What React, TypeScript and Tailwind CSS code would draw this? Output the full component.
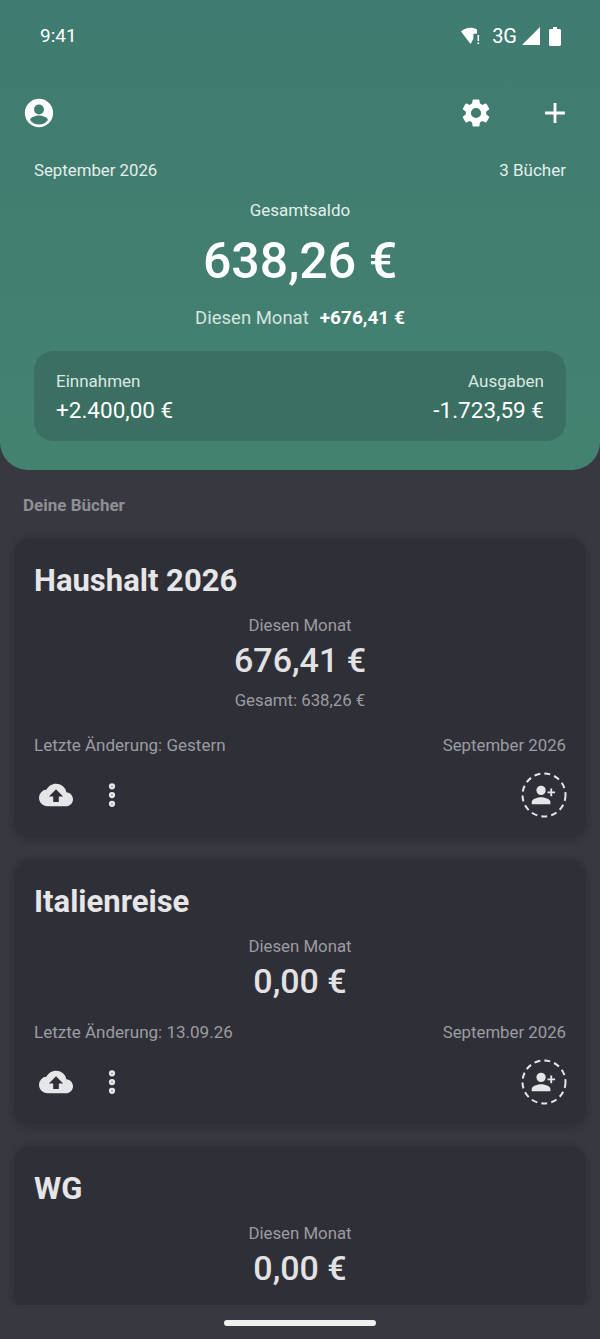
import { MoreVertical } from "lucide-react";

function ProfileIcon() {
  return (
    <svg width="34" height="34" viewBox="0 0 24 24" fill="#fff">
      <path d="M12 2C6.48 2 2 6.48 2 12s4.48 10 10 10 10-4.48 10-10S17.52 2 12 2zm0 4a3.5 3.5 0 1 1 0 7 3.5 3.5 0 0 1 0-7zm0 14.2c-2.6 0-4.9-1.3-6.3-3.3.1-2 4.2-3.1 6.3-3.1s6.2 1.1 6.3 3.1c-1.4 2-3.7 3.3-6.3 3.3z" />
    </svg>
  );
}

function GearIcon() {
  return (
    <svg width="34" height="34" viewBox="0 0 24 24" fill="#fff">
      <path d="M19.14 12.94c.04-.3.06-.61.06-.94 0-.32-.02-.64-.07-.94l2.03-1.58a.49.49 0 0 0 .12-.61l-1.92-3.32a.488.488 0 0 0-.59-.22l-2.39.96c-.5-.38-1.03-.7-1.62-.94l-.36-2.54a.484.484 0 0 0-.48-.41h-3.84c-.24 0-.43.17-.47.41l-.36 2.54c-.59.24-1.13.57-1.62.94l-2.39-.96c-.22-.08-.47 0-.59.22L2.74 8.87c-.12.21-.08.47.12.61l2.03 1.58c-.05.3-.09.63-.09.94s.02.64.07.94l-2.03 1.58a.49.49 0 0 0-.12.61l1.92 3.32c.12.22.37.29.59.22l2.39-.96c.5.38 1.03.7 1.62.94l.36 2.54c.05.24.24.41.48.41h3.84c.24 0 .44-.17.47-.41l.36-2.54c.59-.24 1.13-.56 1.62-.94l2.39.96c.22.08.47 0 .59-.22l1.92-3.32c.12-.22.07-.47-.12-.61l-2.01-1.58zM12 15.6A3.6 3.6 0 1 1 12 8.4a3.6 3.6 0 0 1 0 7.2z" />
    </svg>
  );
}

function PlusIcon() {
  return (
    <svg width="34" height="34" viewBox="0 0 24 24" fill="#fff">
      <path d="M19 13h-6v6h-2v-6H5v-2h6V5h2v6h6v2z" />
    </svg>
  );
}

function CloudIcon() {
  return (
    <svg width="34" height="34" viewBox="0 0 24 24" fill="#e6e6e8">
      <path d="M19.35 10.04A7.49 7.49 0 0 0 12 4C9.11 4 6.6 5.64 5.35 8.04A5.994 5.994 0 0 0 0 14c0 3.31 2.69 6 6 6h13c2.76 0 5-2.24 5-5 0-2.64-2.05-4.78-4.65-4.96zM14 13v4h-4v-4H7l5-5 5 5h-3z" />
    </svg>
  );
}

function InviteButton() {
  return (
    <div className="relative w-[46px] h-[46px] -mr-px">
      <svg width="46" height="46" viewBox="0 0 46 46" fill="none" className="absolute inset-0">
        <circle cx="23" cy="23" r="21.5" stroke="#e6e6e8" strokeWidth="2" strokeDasharray="6 4.1" />
      </svg>
      <svg width="28" height="28" viewBox="0 0 24 24" fill="#e6e6e8" className="absolute left-[9px] top-[9px]">
        <path d="M9.5 12a4 4 0 1 0 0-8 4 4 0 0 0 0 8zm0 2c-2.67 0-8 1.34-8 4v2h16v-2c0-2.66-5.33-4-8-4z" />
        <path d="M19 9V6.5h-1.6V9H15v1.6h2.4V13H19v-2.4h2.5V9H19z" />
      </svg>
    </div>
  );
}

function StatusBar() {
  return (
    <div className="h-[72px] pl-10 pr-[39px] flex items-center justify-between text-white">
      <span className="text-[19px] leading-[24px]">9:41</span>
      <div className="flex items-center">
        <svg width="20" height="20" viewBox="0 0 20 20" fill="#fff">
          <path d="M0 5.5C3 3 6 1.8 9.5 1.8c2.3 0 4.6.6 6.5 1.7v4.2h-3.6v5.1L9.6 18 0 5.5z" />
          <rect x="16.5" y="9" width="1.6" height="6" />
          <rect x="16.5" y="16.4" width="1.6" height="1.7" />
        </svg>
        <span className="ml-[11px] text-[20px] leading-[24px]">3G</span>
        <svg width="18" height="18" viewBox="0 0 18 18" fill="#fff" className="ml-[5px]">
          <path d="M18 0v18H0L18 0z" />
        </svg>
        <svg width="12" height="19" viewBox="0 0 12 19" fill="#fff" className="ml-[9px]">
          <path d="M4 0h4v2h2.5c.8 0 1.5.7 1.5 1.5v14c0 .8-.7 1.5-1.5 1.5h-9C.7 19 0 18.3 0 17.5v-14C0 2.7.7 2 1.5 2H4V0z" />
        </svg>
      </div>
    </div>
  );
}

function Header() {
  return (
    <header className="h-[470px] shrink-0 rounded-b-[28px] bg-gradient-to-b from-[#3f7b70] to-[#448270] text-white">
      <StatusBar />
      <div className="mt-[9px] pl-[22px] pr-[28px] h-[64px] flex items-center justify-between">
        <ProfileIcon />
        <div className="flex items-center gap-[45px]">
          <GearIcon />
          <PlusIcon />
        </div>
      </div>
      <div className="mt-[13px] px-[34px] flex justify-between text-[16.8px] leading-[24px] text-[#e3efeb]">
        <span>September 2026</span>
        <span className="text-[17px]">3 Bücher</span>
      </div>
      <div className="mt-[16px] text-center text-[17px] leading-[24px] text-[#e3efeb]">Gesamtsaldo</div>
      <div className="mt-[8px] text-center text-[50px] leading-[62px] font-medium">638,26 €</div>
      <div className="mt-[14px] flex justify-center items-center gap-[11px] leading-[24px]">
        <span className="text-[18.5px] text-[#d5e5e0]">Diesen Monat</span>
        <span className="text-[19px] font-bold">+676,41 €</span>
      </div>
      <div className="mt-[21px] mx-[34px] h-[90px] rounded-[20px] bg-[#3a6f61] px-[22px] flex justify-between items-center">
        <div>
          <div className="text-[17px] leading-[24px] text-[#dbe8e4]">Einnahmen</div>
          <div className="mt-[3px] text-[22.5px] leading-[28px]">+2.400,00 €</div>
        </div>
        <div className="text-right">
          <div className="text-[17px] leading-[24px] text-[#dbe8e4]">Ausgaben</div>
          <div className="mt-[3px] text-[22.5px] leading-[28px]">-1.723,59 €</div>
        </div>
      </div>
    </header>
  );
}

type Book = {
  title: string;
  month: string;
  total?: string;
  changed?: string;
};

function BookCard({ book }: { book: Book }) {
  return (
    <section className="shrink-0 rounded-[18px] border border-[#333542] bg-[#2f2f37] px-5 pt-[25px] pb-[20px] shadow-[0_2px_8px_rgba(0,0,0,0.18)]">
      <h2 className="text-[31px] leading-[36px] font-bold text-[#e6e6e8]">{book.title}</h2>
      <div className="mt-[15px] text-center text-[16.8px] leading-[22px] text-[#9c9ca1]">Diesen Monat</div>
      <div className="mt-[2px] text-center text-[34px] leading-[44px] font-medium text-[#e2e2e4]">{book.month}</div>
      {book.total && (
        <div className="mt-[7px] mb-[23px] text-center text-[16.8px] leading-[22px] text-[#9c9ca1]">Gesamt: {book.total}</div>
      )}
      {book.changed && (
        <>
          <div className="mt-[18px] flex justify-between text-[16.8px] leading-[22px] text-[#9c9ca1]">
            <span className="text-[17px]">Letzte Änderung: {book.changed}</span>
            <span>September 2026</span>
          </div>
          <div className="mt-[16px] flex items-center justify-between">
            <div className="flex items-center pl-[5px]">
              <CloudIcon />
              <MoreVertical size={30} strokeWidth={3} className="ml-[24px] text-[#e6e6e8]" />
            </div>
            <InviteButton />
          </div>
        </>
      )}
    </section>
  );
}

const books: Book[] = [
  { title: "Haushalt 2026", month: "676,41 €", total: "638,26 €", changed: "Gestern" },
  { title: "Italienreise", month: "0,00 €", changed: "13.09.26" },
  { title: "WG", month: "0,00 €" },
];

export default function App() {
  return (
    <div
      className="w-[600px] h-[1339px] overflow-hidden flex flex-col bg-[#383841]"
      style={{ fontFamily: "Roboto, sans-serif" }}
    >
      <Header />
      <main className="flex-1 min-h-0 overflow-hidden flex flex-col">
        <div className="mt-[23px] px-[23px] text-[17px] leading-[24px] font-bold text-[#8f8f94]">Deine Bücher</div>
        <div className="mt-[20px] px-[13px] flex flex-col gap-[19px]">
          {books.map((book) => (
            <BookCard key={book.title} book={book} />
          ))}
        </div>
      </main>
      <div className="relative z-10 h-[34px] shrink-0 flex items-start justify-center bg-[#383841] pt-[15px]">
        <div className="w-[152px] h-[6px] rounded-full bg-[#f0f0f0]" />
      </div>
    </div>
  );
}
